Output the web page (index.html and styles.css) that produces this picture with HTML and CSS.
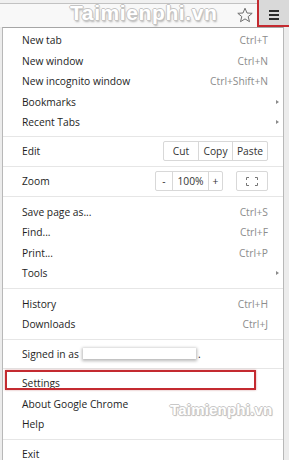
FILE: index.html
```html
<!DOCTYPE html>
<html>
<head>
<meta charset="utf-8">
<link rel="stylesheet" href="styles.css">
</head>
<body>
<div class="toolbar">
  <div class="wm wm-top">Taimienphi.vn</div>
  <svg class="star" width="16" height="16" viewBox="0 0 16 16"><polygon points="8,1.2 10,6 15.2,6.3 11.2,9.6 12.5,14.7 8,11.9 3.5,14.7 4.8,9.6 0.8,6.3 6,6" fill="none" stroke="#707070" stroke-width="1" stroke-linejoin="round"/></svg>
  <div class="menubtn"><span></span><span></span><span></span><div class="hl"></div></div>
</div>
<div class="menu">
  <div class="row"><span class="label">New tab</span><span class="sc">Ctrl+T</span><span class="end"></span></div>
  <div class="row"><span class="label">New window</span><span class="sc">Ctrl+N</span><span class="end"></span></div>
  <div class="row"><span class="label">New incognito window</span><span class="sc">Ctrl+Shift+N</span><span class="end"></span></div>
  <div class="row"><span class="label">Bookmarks</span><span class="sc"></span><span class="end"><i class="arr"></i></span></div>
  <div class="row"><span class="label">Recent Tabs</span><span class="sc"></span><span class="end"><i class="arr"></i></span></div>
  <div class="sep tight"></div>
  <div class="row brow"><span class="label">Edit</span>
    <div class="btns"><span class="b-cut">Cut</span><span class="b-copy">Copy</span><span class="b-paste">Paste</span></div>
    <span class="end"></span></div>
  <div class="sep tight"></div>
  <div class="row brow"><span class="label">Zoom</span>
    <div class="btns"><span class="b-minus">-</span><span class="b-pct">100%</span><span class="b-plus">+</span></div>
    <div class="btns fs"><svg width="12" height="9" viewBox="0 0 12 9"><path d="M0.5 3V0.5H3M9 0.5H11.5V3M11.5 6V8.5H9M3 8.5H0.5V6" fill="none" stroke="#777" stroke-width="1"/></svg></div>
    <span class="end"></span></div>
  <div class="sep tight after"></div>
  <div class="row"><span class="label">Save page as...</span><span class="sc">Ctrl+S</span><span class="end"></span></div>
  <div class="row"><span class="label">Find...</span><span class="sc">Ctrl+F</span><span class="end"></span></div>
  <div class="row"><span class="label">Print...</span><span class="sc">Ctrl+P</span><span class="end"></span></div>
  <div class="row"><span class="label">Tools</span><span class="sc"></span><span class="end"><i class="arr"></i></span></div>
  <div class="sep more"></div>
  <div class="row"><span class="label">History</span><span class="sc">Ctrl+H</span><span class="end"></span></div>
  <div class="row"><span class="label">Downloads</span><span class="sc">Ctrl+J</span><span class="end"></span></div>
  <div class="sep"></div>
  <div class="row"><span class="label">Signed in as <span class="redact"></span>.</span><span class="sc"></span><span class="end"></span></div>
  <div class="sep"></div>
  <div class="row settings"><span class="label">Settings</span><span class="sc"></span><span class="end"></span><div class="hl2"></div></div>
  <div class="row"><span class="label">About Google Chrome</span><span class="sc"></span><span class="end"></span></div>
  <div class="row"><span class="label">Help</span><span class="sc"></span><span class="end"></span></div>
  <div class="sep"></div>
  <div class="row last"><span class="label">Exit</span><span class="sc"></span><span class="end"></span></div>
  <div class="wm wm-bottom">Taimienphi.vn</div>
</div>
</body>
</html>
```
FILE: styles.css
```css
html, body {
  margin: 0;
  padding: 0;
}
body {
  width: 289px;
  height: 460px;
  overflow: hidden;
  background: #ececec;
  font-family: "Open Sans", "Noto Sans", sans-serif;
  font-size: 10.25px;
  color: #1e1e1e;
}
.toolbar {
  position: relative;
  height: 27px;
  display: flex;
  justify-content: flex-end;
  align-items: flex-start;
  background: linear-gradient(#f0f0f0 0 3px, #c2c2c2 3px 4px, #f8f8f8 4px 100%);
}
.star {
  margin-top: 7px;
  margin-right: 5px;
}
.menubtn {
  position: relative;
  width: 31px;
  height: 26px;
  box-sizing: border-box;
  padding-top: 10px;
  background: #d9d9d9;
  border-left: 1px solid #b5b5b5;
  display: flex;
  flex-direction: column;
  align-items: center;
  gap: 2px;
}
.menubtn span {
  display: block;
  width: 10px;
  height: 2px;
  background: #2a2a2a;
}
.hl {
  position: absolute;
  left: -2px;
  top: -3px;
  right: -3px;
  bottom: -1px;
  border: 2px solid #c42a30;
}
.wm {
  position: absolute;
  font-family: "Liberation Sans", sans-serif;
  font-weight: bold;
  color: #fff;
  white-space: nowrap;
}
.wm-top {
  left: 70px;
  top: 1px;
  font-size: 21px;
  letter-spacing: 0.6px;
  text-shadow: -1px 0 #c4c4c4, 1px 0 #c4c4c4, 0 -1px #c4c4c4, 0 1px #c4c4c4, 1px 2px 2px #b0b0b0;
}
.wm-bottom {
  left: 167px;
  top: 373px;
  font-size: 15px;
  letter-spacing: 0.2px;
  text-shadow: -1px 0 #c8c8c8, 1px 0 #c8c8c8, 0 -1px #c8c8c8, 0 1px #c8c8c8, 1px 1px 1px #b4b4b4;
}
.menu {
  position: relative;
  margin-left: 2px;
  width: 282px;
  box-sizing: border-box;
  border: 1px solid #b8b8b8;
  border-top-color: #a6a6a6;
  background: #fff;
  padding-top: 2px;
}
.row {
  position: relative;
  display: flex;
  align-items: center;
  height: 20.5px;
  padding-left: 19px;
}
.label {
  flex: 1;
  white-space: nowrap;
  display: flex;
  align-items: center;
}
.sc {
  color: #8c8c8c;
}
.end {
  width: 15px;
  flex: none;
  display: flex;
  align-items: center;
  padding-left: 8px;
  box-sizing: border-box;
}
.arr {
  display: block;
  width: 0;
  height: 0;
  border-top: 2.5px solid transparent;
  border-bottom: 2.5px solid transparent;
  border-left: 3px solid #8a8a8a;
}
.sep {
  height: 1px;
  background: #e6e6e6;
  margin: 4px 0;
}
.sep.tight {
  margin: 3px 0;
}
.sep.tight.after {
  margin-bottom: 5px;
}
.sep.more {
  margin-bottom: 5px;
}
.brow {
  height: 23px;
}
.btns {
  display: flex;
  height: 20px;
  box-sizing: border-box;
  border: 1px solid #d8d8d8;
  border-radius: 2px;
  background: #fff;
  color: #333;
}
.btns span {
  display: flex;
  align-items: center;
  justify-content: center;
  box-sizing: border-box;
}
.btns span + span {
  border-left: 1px solid #d8d8d8;
}
.b-cut { width: 34px; }
.b-copy { width: 34px; }
.b-paste { width: 35px; }
.b-minus { width: 16px; }
.b-pct { width: 36px; }
.b-plus { width: 14px; }
.fs {
  width: 32px;
  margin-left: 13px;
  align-items: center;
  justify-content: center;
}
.redact {
  display: inline-block;
  width: 113px;
  height: 11px;
  margin-left: 4px;
  margin-right: 2px;
  background: #fff;
  box-shadow: 0 1px 3px 1px #b8b8b8;
}
.hl2 {
  position: absolute;
  left: 2px;
  top: -3px;
  width: 251px;
  height: 20px;
  box-sizing: border-box;
  border: 2px solid #c42a30;
  box-shadow: 0 0 2px rgba(150, 20, 20, 0.4);
}
.row.last {
  height: 16.5px;
  align-items: flex-start;
  line-height: 20.5px;
}
```
